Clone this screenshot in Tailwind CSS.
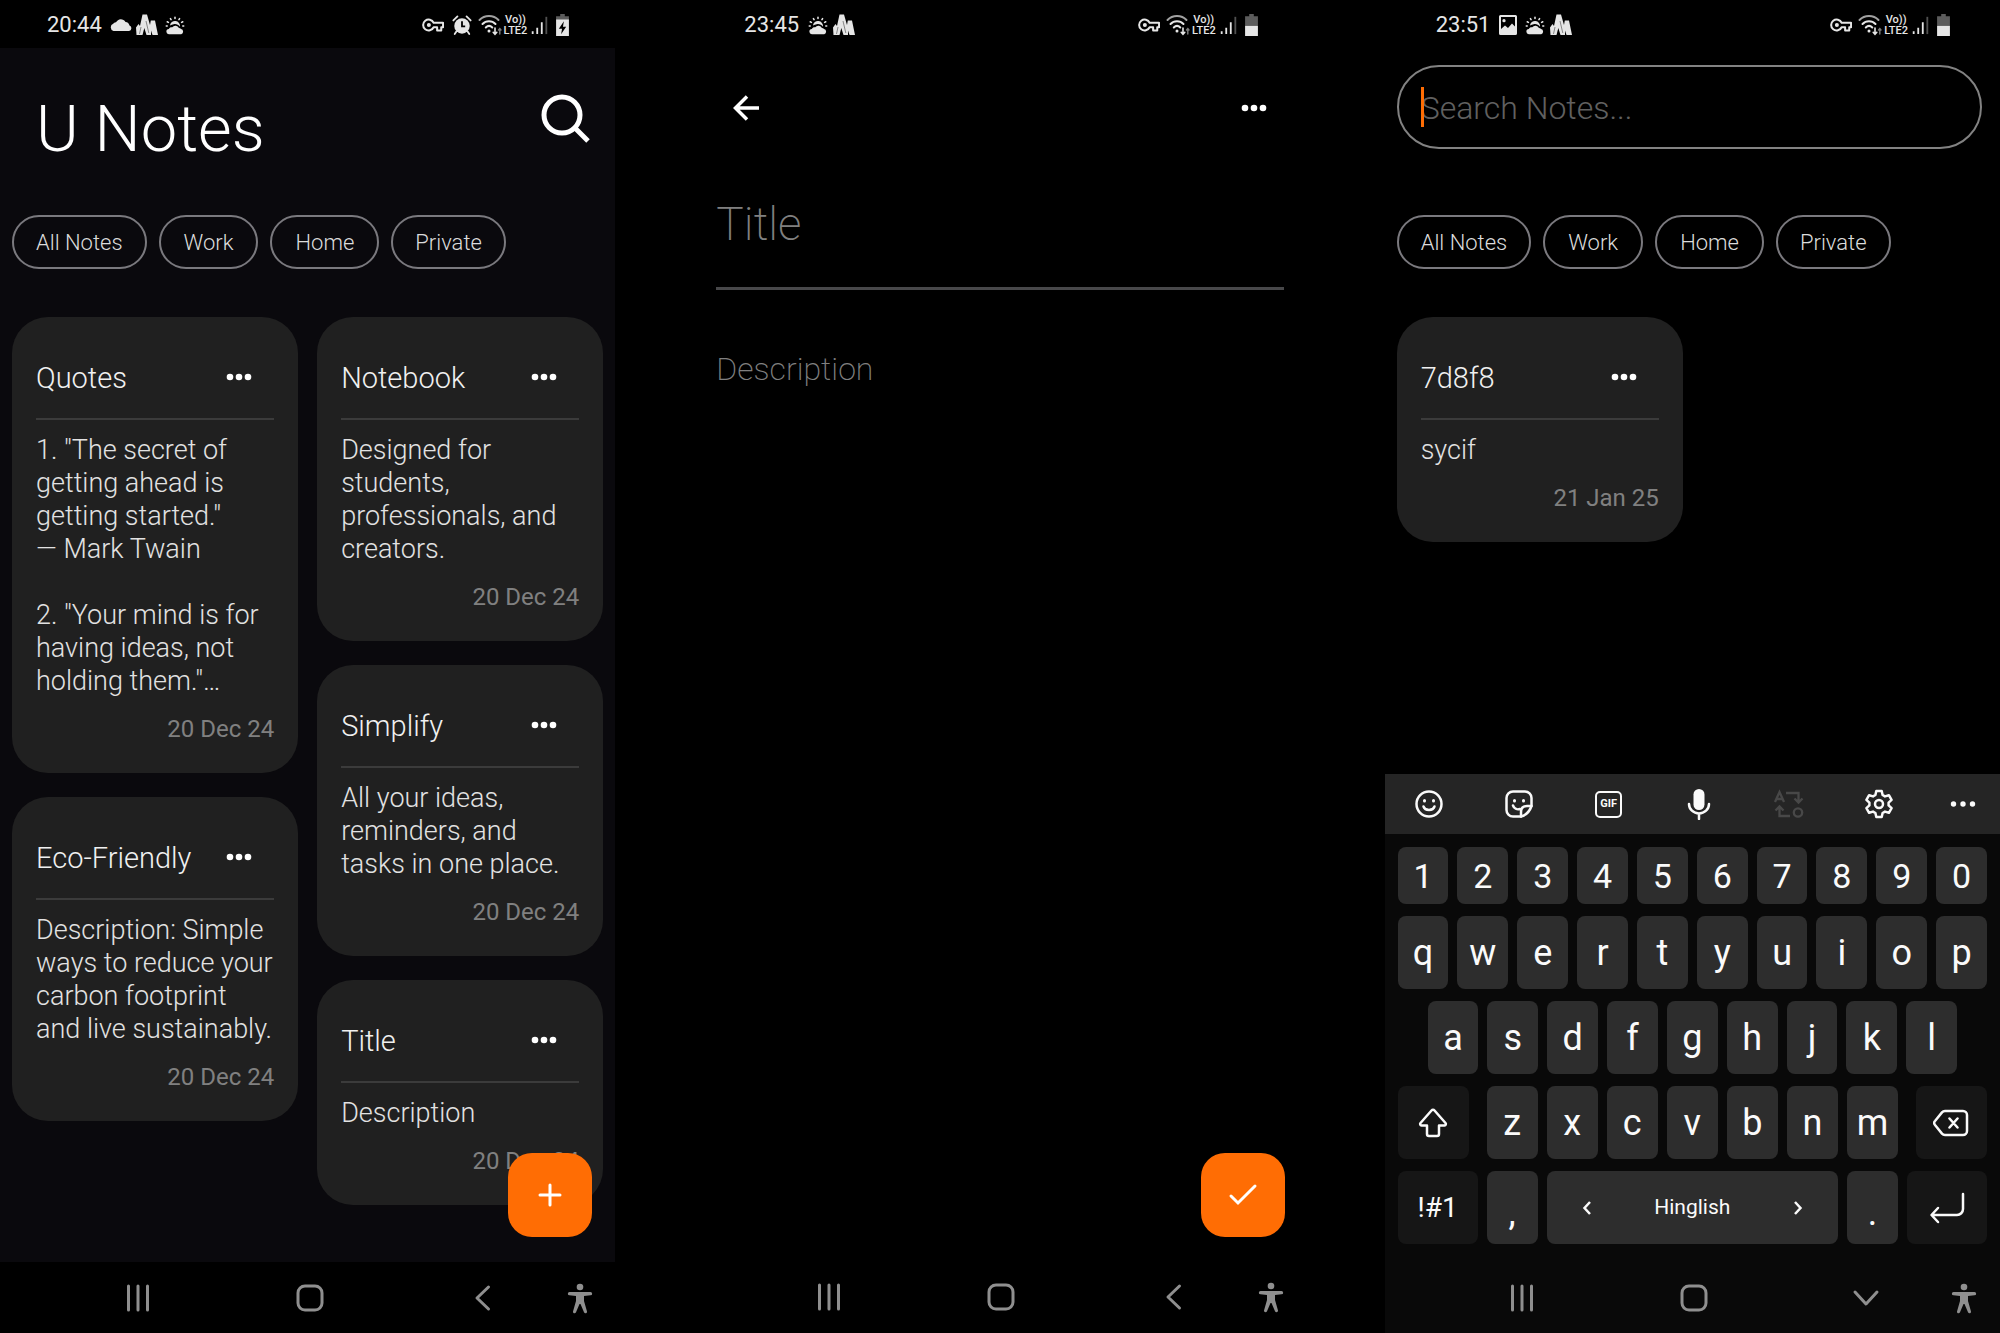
<!DOCTYPE html>
<html lang="en">
<head>
<meta charset="utf-8">
<meta name="viewport" content="width=device-width, initial-scale=1">
<title>U Notes</title>
<script src="https://cdn.jsdelivr.net/npm/@tailwindcss/browser@4"></script>
</head>
<body class="bg-black font-[Roboto,sans-serif] text-white">

<!-- Shared icons -->
<svg class="hidden" aria-hidden="true">
  <symbol id="i-cloud" viewBox="0 0 22 20"><path fill="currentColor" d="M3.500 16a3.800 3.800 0 0 1-.3-7.200 3 3 0 0 1 2.800-1.600A5.500 5.500 0 0 1 15.500 7a4.600 4.600 0 0 1 4 3.600 2.800 2.800 0 0 1-.5 5.400z"/></symbol>
  <symbol id="i-peaks" viewBox="0 0 22 22"><path fill="currentColor" d="M.5 21 0 13.500 2.500 10l1.500 2L6.500.5h4.500L14 11l.8-4.500H19L22 21h-5.500L15 16.500V21h-4.500L8.300 14 6.500 21z"/><path d="m5 13-1.500 7M10 7l2.800 12" stroke="#000" stroke-width=".7" opacity=".6" fill="none"/></symbol>
  <symbol id="i-sun" viewBox="0 0 24 24"><path fill="currentColor" d="M5.500 22a2.800 2.800 0 0 1-.2-5.600C6 14.700 7.500 14.200 9 14.500a4.300 4.300 0 0 1 7.300.8 3.500 3.500 0 0 1 2.300 1.100 2.900 2.900 0 0 1 .2 5.600z"/><path d="M6.500 12.500a5.500 5.500 0 0 1 11 1.300c-2-2.300-4.500-3.300-7-2.500-1.500.5-2.500.8-4 1.200z" fill="currentColor"/><path d="M12 3.500v1.300M7 5l.7 1.200M17 5l-.7 1.200M3.500 8.500l1.300.7M20.500 8.500l-1.300.7M2.500 13h1M20.500 13h1" stroke="currentColor" stroke-width="1.700" stroke-linecap="round"/></symbol>
  <symbol id="i-image" viewBox="0 0 20 22"><path fill="currentColor" fill-rule="evenodd" d="M2.500 1h15A1.500 1.500 0 0 1 19 2.500v17a1.500 1.500 0 0 1-1.500 1.500h-15A1.500 1.500 0 0 1 1 19.500v-17A1.500 1.500 0 0 1 2.500 1zM3 3v12l4-3.500 3 2.500 4-4.500 3 3V3zM6 5a1.600 1.600 0 1 1 0 3.300A1.600 1.600 0 0 1 6 5z"/></symbol>
  <symbol id="i-key" viewBox="0 0 24 20"><path fill="none" stroke="currentColor" stroke-width="2.200" stroke-linejoin="round" d="M12.700 7.500H23v5h-2v3.500h-4.500v-3.500h-3.800a6 6 0 1 1 0-5z"/><circle cx="7.500" cy="10" r="2.200" fill="currentColor"/></symbol>
  <symbol id="i-alarm" viewBox="0 0 22 24"><circle cx="11" cy="13" r="8.500" fill="currentColor"/><path d="M1.500 7 6 2.500M20.500 7 16 2.500M5 19l-2 3M17 19l2 3" stroke="currentColor" stroke-width="2" stroke-linecap="round"/><path d="M11 8v5.500h3.500" stroke="#000" stroke-width="2" fill="none"/></symbol>
  <symbol id="i-wifi" viewBox="0 0 24 24"><g fill="none" stroke="currentColor" stroke-width="2" stroke-linecap="round"><path d="M1.500 7c5-5.300 14-5.300 19 0" opacity=".7"/><path d="M4.500 11c3.500-3.700 9.500-3.700 13 0M7.800 14.500c2-2 4.500-2 6.500 0"/><path d="M17 15v6M15.200 19.300 17 21.300l1.800-2" stroke-width="1.600"/><path d="M21.800 21v-5M20.500 17l1.300-1.500L23 17" stroke-width="1.400" opacity=".55"/></g><circle cx="11" cy="18" r="1.500" fill="currentColor"/></symbol>
  <symbol id="i-signal" viewBox="0 0 18 22"><g stroke="currentColor" stroke-width="2"><path d="M1.500 21v-3M6.500 21v-7M11.500 21V8"/><path d="M16.500 21V2" opacity=".35"/></g></symbol>
  <symbol id="i-battery" viewBox="0 0 14 24"><path fill="#5c5c5c" d="M4.500 0h5v2.500H14V13H0V2.500h4.500z"/><path fill="currentColor" d="M0 13h14v11H0z"/></symbol>
  <symbol id="i-charging" viewBox="0 0 14 24"><path fill="#5c5c5c" d="M4.500 0h5v2.500H14V7H0V2.500h4.500z"/><path fill="currentColor" d="M0 6h14v18H0z"/><path fill="#000" d="M8.500 8 3 16h3.500L5.500 22 11 14H7.500z"/></symbol>
  <symbol id="i-dots" viewBox="0 0 28 10"><g fill="currentColor"><circle cx="5" cy="5" r="3.300"/><circle cx="14" cy="5" r="3.300"/><circle cx="23" cy="5" r="3.300"/></g></symbol>
  <symbol id="i-recents" viewBox="0 0 32 32"><path d="M6.500 4v24M16 4v24M25.500 4v24" stroke="currentColor" stroke-width="3" stroke-linecap="round"/></symbol>
  <symbol id="i-home" viewBox="0 0 32 32"><rect x="4" y="4" width="24" height="24" rx="7" fill="none" stroke="currentColor" stroke-width="3"/></symbol>
  <symbol id="i-back" viewBox="0 0 32 32"><path d="M22.500 5 11 16l11.500 11" fill="none" stroke="currentColor" stroke-width="3" stroke-linecap="round" stroke-linejoin="round"/></symbol>
  <symbol id="i-down" viewBox="0 0 32 32"><path d="m5 10 11 12 11-12" fill="none" stroke="currentColor" stroke-width="3" stroke-linecap="round" stroke-linejoin="round"/></symbol>
  <symbol id="i-access" viewBox="0 0 32 32"><circle cx="16" cy="5" r="3.300" fill="currentColor"/><path fill="currentColor" d="M5.500 10h21a1.300 1.300 0 0 1 0 3.300L20 14v5l3 10.500c.4 1.800-2.300 2.500-3 .8L16.500 22h-1L12 30.300c-.7 1.700-3.400 1-3-.8L12 19v-5l-6.500-.7a1.300 1.300 0 0 1 0-3.300z"/></symbol>
</svg>

<div class="grid min-h-screen grid-cols-3 gap-[77px]">

  <!-- Notes list -->
  <section class="relative flex flex-col bg-[#0a090d]" aria-label="Notes list">
    <div class="flex h-12 items-center bg-black pt-[2px] pr-[46px] pl-[47px] text-[#e6e6e6]">
      <span class="text-[22px] leading-6">20:44</span>
      <svg class="ml-2 h-5 w-[22px]"><use href="#i-cloud"/></svg>
      <svg class="ml-1 size-[22px]"><use href="#i-peaks"/></svg>
      <svg class="ml-[6px] size-[22px]"><use href="#i-sun"/></svg>
      <svg class="ml-auto h-5 w-[22px]"><use href="#i-key"/></svg>
      <svg class="ml-2 h-[22px] w-5"><use href="#i-alarm"/></svg>
      <svg class="ml-[6px] size-6"><use href="#i-wifi"/></svg>
      <span class="ml-[2px] text-center text-[11px] leading-[11px] font-medium">Vo))<br>LTE2</span>
      <svg class="ml-1 h-5 w-[17px]"><use href="#i-signal"/></svg>
      <svg class="ml-2 h-[22px] w-[13px]"><use href="#i-charging"/></svg>
    </div>

    <header class="flex h-[167px] items-start justify-between pt-[45px] pr-6 pl-9">
      <h1 class="text-[65px] leading-[72px] font-[350]">U Notes</h1>
      <button type="button" aria-label="Search" class="flex size-[52px] items-center justify-center">
        <svg class="size-[52px]" viewBox="0 0 52 52" fill="none" stroke="currentColor" stroke-width="5"><circle cx="23" cy="22" r="18"/><path d="m36 35 13 13"/></svg>
      </button>
    </header>

    <nav class="flex gap-3 px-3 text-[22px] leading-[48px] font-light text-[#dcdcdc]" aria-label="Categories">
      <button type="button" class="rounded-[27px] border-2 border-[#7a797e] px-[22px] pt-[2px]">All Notes</button>
      <button type="button" class="rounded-[27px] border-2 border-[#7a797e] px-[23px] pt-[2px]">Work</button>
      <button type="button" class="rounded-[27px] border-2 border-[#7a797e] px-[23px] pt-[2px]">Home</button>
      <button type="button" class="rounded-[27px] border-2 border-[#7a797e] px-[22px] pt-[2px]">Private</button>
    </nav>

    <main class="mt-12 grid flex-1 grid-cols-2 items-start gap-[19px] px-3 font-light">
      <div class="flex flex-col gap-6">
        <article class="rounded-[36px] bg-[#202020] px-6 pt-6 pb-[29px]">
          <div class="mb-[5px] flex h-[72px] items-center justify-between">
            <h2 class="pt-[2px] text-[29px] leading-9 text-[#f0f0f0]">Quotes</h2>
            <button type="button" aria-label="Note options" class="flex h-12 w-[70px] items-center justify-center"><svg class="h-[10px] w-7"><use href="#i-dots"/></svg></button>
          </div>
          <p class="border-t-2 border-[#3b3b3b] pt-[14px] text-[27px] leading-[33px] whitespace-nowrap text-[#e2e2e2]">1. "The secret of<br>getting ahead is<br>getting started."<br>— Mark Twain<br><br>2. "Your mind is for<br>having ideas, not<br>holding them."…</p>
          <time class="mt-4 block text-right text-2xl leading-[30px] font-normal text-[#808080]">20 Dec 24</time>
        </article>
        <article class="rounded-[36px] bg-[#202020] px-6 pt-6 pb-[29px]">
          <div class="mb-[5px] flex h-[72px] items-center justify-between">
            <h2 class="pt-[2px] text-[29px] leading-9 text-[#f0f0f0]">Eco-Friendly</h2>
            <button type="button" aria-label="Note options" class="flex h-12 w-[70px] items-center justify-center"><svg class="h-[10px] w-7"><use href="#i-dots"/></svg></button>
          </div>
          <p class="border-t-2 border-[#3b3b3b] pt-[14px] text-[27px] leading-[33px] whitespace-nowrap text-[#e2e2e2]">Description: Simple<br>ways to reduce your<br>carbon footprint<br>and live sustainably.</p>
          <time class="mt-4 block text-right text-2xl leading-[30px] font-normal text-[#808080]">20 Dec 24</time>
        </article>
      </div>
      <div class="flex flex-col gap-6">
        <article class="rounded-[36px] bg-[#202020] px-6 pt-6 pb-[29px]">
          <div class="mb-[5px] flex h-[72px] items-center justify-between">
            <h2 class="pt-[2px] text-[29px] leading-9 text-[#f0f0f0]">Notebook</h2>
            <button type="button" aria-label="Note options" class="flex h-12 w-[70px] items-center justify-center"><svg class="h-[10px] w-7"><use href="#i-dots"/></svg></button>
          </div>
          <p class="border-t-2 border-[#3b3b3b] pt-[14px] text-[27px] leading-[33px] whitespace-nowrap text-[#e2e2e2]">Designed for<br>students,<br>professionals, and<br>creators.</p>
          <time class="mt-4 block text-right text-2xl leading-[30px] font-normal text-[#808080]">20 Dec 24</time>
        </article>
        <article class="rounded-[36px] bg-[#202020] px-6 pt-6 pb-[29px]">
          <div class="mb-[5px] flex h-[72px] items-center justify-between">
            <h2 class="pt-[2px] text-[29px] leading-9 text-[#f0f0f0]">Simplify</h2>
            <button type="button" aria-label="Note options" class="flex h-12 w-[70px] items-center justify-center"><svg class="h-[10px] w-7"><use href="#i-dots"/></svg></button>
          </div>
          <p class="border-t-2 border-[#3b3b3b] pt-[14px] text-[27px] leading-[33px] whitespace-nowrap text-[#e2e2e2]">All your ideas,<br>reminders, and<br>tasks in one place.</p>
          <time class="mt-4 block text-right text-2xl leading-[30px] font-normal text-[#808080]">20 Dec 24</time>
        </article>
        <article class="rounded-[36px] bg-[#202020] px-6 pt-6 pb-[29px]">
          <div class="mb-[5px] flex h-[72px] items-center justify-between">
            <h2 class="pt-[2px] text-[29px] leading-9 text-[#f0f0f0]">Title</h2>
            <button type="button" aria-label="Note options" class="flex h-12 w-[70px] items-center justify-center"><svg class="h-[10px] w-7"><use href="#i-dots"/></svg></button>
          </div>
          <p class="border-t-2 border-[#3b3b3b] pt-[14px] text-[27px] leading-[33px] whitespace-nowrap text-[#e2e2e2]">Description</p>
          <time class="mt-4 block text-right text-2xl leading-[30px] font-normal text-[#808080]">20 Dec 24</time>
        </article>
      </div>
    </main>

    <button type="button" aria-label="Add note" class="absolute right-[23px] bottom-[96px] flex size-[84px] items-center justify-center rounded-3xl bg-[#ff6d04]">
      <svg class="size-7" viewBox="0 0 28 28" stroke="#fff" stroke-width="3" stroke-linecap="round"><path d="M14 4v20M4 14h20"/></svg>
    </button>

    <nav class="flex h-[71px] items-center bg-black pl-[52px] text-[#8f8f8f]" aria-label="System">
      <button type="button" aria-label="Recents" class="flex w-[172px] justify-center"><svg class="size-8"><use href="#i-recents"/></svg></button>
      <button type="button" aria-label="Home" class="flex w-[172px] justify-center"><svg class="size-8"><use href="#i-home"/></svg></button>
      <button type="button" aria-label="Back" class="flex w-[172px] justify-center"><svg class="size-8"><use href="#i-back"/></svg></button>
      <button type="button" aria-label="Accessibility" class="flex w-6 justify-center"><svg class="size-8 shrink-0"><use href="#i-access"/></svg></button>
    </nav>
  </section>

  <!-- Note editor -->
  <section class="relative flex flex-col bg-black" aria-label="Note editor">
    <div class="flex h-12 items-center pt-[2px] pr-[50px] pl-[52px] text-[#e6e6e6]">
      <span class="text-[22px] leading-6">23:45</span>
      <svg class="ml-2 size-[22px]"><use href="#i-sun"/></svg>
      <svg class="ml-1 size-[22px]"><use href="#i-peaks"/></svg>
      <svg class="ml-auto h-5 w-[22px]"><use href="#i-key"/></svg>
      <svg class="ml-[6px] size-6"><use href="#i-wifi"/></svg>
      <span class="ml-[2px] text-center text-[11px] leading-[11px] font-medium">Vo))<br>LTE2</span>
      <svg class="ml-1 h-5 w-[17px]"><use href="#i-signal"/></svg>
      <svg class="ml-2 h-[22px] w-[13px]"><use href="#i-battery"/></svg>
    </div>

    <header class="flex h-[120px] items-center justify-between px-[30px]">
      <button type="button" aria-label="Go back" class="flex size-12 items-center justify-center">
        <svg class="size-8" viewBox="0 0 32 32" fill="none" stroke="currentColor" stroke-width="3.500"><path d="M29 16H6M17 4.500 5.500 16 17 27.500"/></svg>
      </button>
      <button type="button" aria-label="More options" class="flex size-12 items-center justify-center"><svg class="h-[10px] w-7"><use href="#i-dots"/></svg></button>
    </header>

    <form class="flex flex-col px-6">
      <input type="text" aria-label="Title" placeholder="Title" class="h-[122px] w-full border-b-[3px] border-[#48484a] bg-transparent pb-2 text-[46px] font-extralight outline-none placeholder:text-[#808080]">
      <textarea aria-label="Description" placeholder="Description" rows="1" class="mt-[57px] h-[44px] w-full resize-none overflow-hidden bg-transparent text-[32px] leading-[44px] font-extralight outline-none placeholder:text-[#808080]"></textarea>
    </form>

    <button type="button" aria-label="Save note" class="absolute right-[23px] bottom-[96px] flex size-[84px] items-center justify-center rounded-3xl bg-[#ff6d04]">
      <svg class="size-8" viewBox="0 0 32 32" fill="none" stroke="#fff" stroke-width="3" stroke-linecap="round"><path d="m4 17 7 7L28 7"/></svg>
    </button>

    <nav class="mt-auto flex h-[72px] items-center pl-[51px] text-[#8f8f8f]" aria-label="System">
      <button type="button" aria-label="Recents" class="flex w-[172px] justify-center"><svg class="size-8"><use href="#i-recents"/></svg></button>
      <button type="button" aria-label="Home" class="flex w-[172px] justify-center"><svg class="size-8"><use href="#i-home"/></svg></button>
      <button type="button" aria-label="Back" class="flex w-[172px] justify-center"><svg class="size-8"><use href="#i-back"/></svg></button>
      <button type="button" aria-label="Accessibility" class="flex w-6 justify-center"><svg class="size-8 shrink-0"><use href="#i-access"/></svg></button>
    </nav>
  </section>

  <!-- Search -->
  <section class="flex flex-col bg-black" aria-label="Search">
    <div class="flex h-12 items-center pt-[2px] pr-[50px] pl-[51px] text-[#e6e6e6]">
      <span class="text-[22px] leading-6">23:51</span>
      <svg class="ml-2 h-[22px] w-5"><use href="#i-image"/></svg>
      <svg class="ml-[6px] size-[22px]"><use href="#i-sun"/></svg>
      <svg class="ml-1 size-[22px]"><use href="#i-peaks"/></svg>
      <svg class="ml-auto h-5 w-[22px]"><use href="#i-key"/></svg>
      <svg class="ml-[6px] size-6"><use href="#i-wifi"/></svg>
      <span class="ml-[2px] text-center text-[11px] leading-[11px] font-medium">Vo))<br>LTE2</span>
      <svg class="ml-1 h-5 w-[17px]"><use href="#i-signal"/></svg>
      <svg class="ml-2 h-[22px] w-[13px]"><use href="#i-battery"/></svg>
    </div>

    <div class="relative mt-[17px] mr-[18px] mb-[66px] ml-3">
      <input type="search" aria-label="Search notes" placeholder="Search Notes..." class="h-[84px] w-full rounded-[42px] border-2 border-[#828282] bg-transparent px-[22px] pt-[2px] text-[32px] font-light outline-none placeholder:text-[#606060]">
      <span class="absolute top-[22px] left-6 h-10 w-[3px] bg-[#ff6d04]" aria-hidden="true"></span>
    </div>

    <nav class="flex gap-3 px-3 text-[22px] leading-[48px] font-light text-[#dcdcdc]" aria-label="Categories">
      <button type="button" class="rounded-[27px] border-2 border-[#7a797e] px-[22px] pt-[2px]">All Notes</button>
      <button type="button" class="rounded-[27px] border-2 border-[#7a797e] px-[23px] pt-[2px]">Work</button>
      <button type="button" class="rounded-[27px] border-2 border-[#7a797e] px-[23px] pt-[2px]">Home</button>
      <button type="button" class="rounded-[27px] border-2 border-[#7a797e] px-[22px] pt-[2px]">Private</button>
    </nav>

    <main class="mt-12 grid grid-cols-2 items-start gap-[19px] px-3 font-light">
      <article class="rounded-[36px] bg-[#202020] px-6 pt-6 pb-[29px]">
        <div class="mb-[5px] flex h-[72px] items-center justify-between">
          <h2 class="pt-[2px] text-[29px] leading-9 text-[#f0f0f0]">7d8f8</h2>
          <button type="button" aria-label="Note options" class="flex h-12 w-[70px] items-center justify-center"><svg class="h-[10px] w-7"><use href="#i-dots"/></svg></button>
        </div>
        <p class="border-t-2 border-[#3b3b3b] pt-[14px] text-[27px] leading-[33px] whitespace-nowrap text-[#e2e2e2]">sycif</p>
        <time class="mt-4 block text-right text-2xl leading-[30px] font-normal text-[#808080]">21 Jan 25</time>
      </article>
    </main>

    <!-- On-screen keyboard -->
    <div class="mt-auto bg-[#090909]">
      <div class="flex h-[60px] items-center gap-[58px] bg-[#252525] pl-7">
        <button type="button" aria-label="Emoji"><svg class="size-8" viewBox="0 0 32 32" fill="none" stroke="#fafafa" stroke-width="2.500" stroke-linecap="round"><circle cx="16" cy="16" r="12.500"/><path d="M10.500 18.500c1.500 4.500 9.500 4.500 11 0"/><path d="M11.500 12.500v.5M20.500 12.500v.5" stroke-width="3"/></svg></button>
        <button type="button" aria-label="Stickers"><svg class="size-8" viewBox="0 0 32 32" fill="none" stroke="#fafafa" stroke-width="2.500" stroke-linecap="round" stroke-linejoin="round"><path d="M18 28.500h-8A6.500 6.500 0 0 1 3.500 22V10A6.500 6.500 0 0 1 10 3.500h12a6.500 6.500 0 0 1 6.500 6.500v8c-2 6-5 9-10.500 10.500z"/><path d="M18 28.500V24c0-4 2-6 6-6h4.500M10 17.500c1 3 4 4.500 7 3.500"/><path d="M11.500 12.500v.5M20.500 12.500v.5" stroke-width="3"/></svg></button>
        <button type="button" aria-label="GIFs" class="flex size-8 items-center justify-center"><span class="flex size-[27px] items-center justify-center rounded-[5px] border-[2px] border-[#fafafa] text-[11px] leading-3 font-bold text-[#fafafa]">GIF</span></button>
        <button type="button" aria-label="Voice input"><svg class="size-8" viewBox="0 0 32 32"><rect x="10.500" y="1" width="11" height="21" rx="5.500" fill="#fafafa"/><path d="M6 16a10 9.500 0 0 0 20 0M16 25.500V31" fill="none" stroke="#fafafa" stroke-width="2.500" stroke-linecap="round"/></svg></button>
        <button type="button" aria-label="Translate"><svg class="size-8" viewBox="0 0 32 32" fill="none" stroke="#484848" stroke-width="2.300"><path d="m2 14 4.500-10L11 14M3.500 11h6M13 5h12.500v9M21.500 10.500l4 4 4-4M17 28H6.500v-9M2.500 22.500l4-4 4 4"/><circle cx="25" cy="24.500" r="4.200"/></svg></button>
        <button type="button" aria-label="Keyboard settings"><svg class="size-8" viewBox="0 0 32 32" fill="none" stroke="#fafafa" stroke-width="2.500" stroke-linejoin="round"><path d="M13.300 3h5.400l.9 4 2.400 1.400 3.900-1.200 2.700 4.600-3 2.800v2.800l3 2.800-2.700 4.600-3.900-1.200-2.400 1.400-.9 4h-5.400l-.9-4L10 23.600l-3.900 1.200-2.700-4.600 3-2.800v-2.800l-3-2.800 2.700-4.600L10 8.400 12.400 7z"/><circle cx="16" cy="16" r="4"/></svg></button>
        <button type="button" aria-label="More keyboard tools" class="flex w-5 justify-center"><svg class="h-[10px] w-7 shrink-0" viewBox="0 0 28 10" fill="#fafafa"><circle cx="4.500" cy="5" r="2.700"/><circle cx="14" cy="5" r="2.700"/><circle cx="23.500" cy="5" r="2.700"/></svg></button>
      </div>

      <div class="flex flex-col gap-3 px-[13px] pt-[13px] pb-[18px] text-4xl text-[#fafafa]">
        <div class="grid h-[57px] grid-cols-10 gap-[9px] text-[34px]">
          <button type="button" class="rounded-lg bg-[#2d2d2d] pt-[2px]">1</button><button type="button" class="rounded-lg bg-[#2d2d2d] pt-[2px]">2</button><button type="button" class="rounded-lg bg-[#2d2d2d] pt-[2px]">3</button><button type="button" class="rounded-lg bg-[#2d2d2d] pt-[2px]">4</button><button type="button" class="rounded-lg bg-[#2d2d2d] pt-[2px]">5</button><button type="button" class="rounded-lg bg-[#2d2d2d] pt-[2px]">6</button><button type="button" class="rounded-lg bg-[#2d2d2d] pt-[2px]">7</button><button type="button" class="rounded-lg bg-[#2d2d2d] pt-[2px]">8</button><button type="button" class="rounded-lg bg-[#2d2d2d] pt-[2px]">9</button><button type="button" class="rounded-lg bg-[#2d2d2d] pt-[2px]">0</button>
        </div>
        <div class="grid h-[73px] grid-cols-10 gap-[9px]">
          <button type="button" class="rounded-lg bg-[#2d2d2d]">q</button><button type="button" class="rounded-lg bg-[#2d2d2d]">w</button><button type="button" class="rounded-lg bg-[#2d2d2d]">e</button><button type="button" class="rounded-lg bg-[#2d2d2d]">r</button><button type="button" class="rounded-lg bg-[#2d2d2d]">t</button><button type="button" class="rounded-lg bg-[#2d2d2d]">y</button><button type="button" class="rounded-lg bg-[#2d2d2d]">u</button><button type="button" class="rounded-lg bg-[#2d2d2d]">i</button><button type="button" class="rounded-lg bg-[#2d2d2d]">o</button><button type="button" class="rounded-lg bg-[#2d2d2d]">p</button>
        </div>
        <div class="grid h-[73px] grid-cols-9 gap-[9px] px-[30px]">
          <button type="button" class="rounded-lg bg-[#2d2d2d]">a</button><button type="button" class="rounded-lg bg-[#2d2d2d]">s</button><button type="button" class="rounded-lg bg-[#2d2d2d]">d</button><button type="button" class="rounded-lg bg-[#2d2d2d]">f</button><button type="button" class="rounded-lg bg-[#2d2d2d]">g</button><button type="button" class="rounded-lg bg-[#2d2d2d]">h</button><button type="button" class="rounded-lg bg-[#2d2d2d]">j</button><button type="button" class="rounded-lg bg-[#2d2d2d]">k</button><button type="button" class="rounded-lg bg-[#2d2d2d]">l</button>
        </div>
        <div class="flex h-[73px] gap-[18px]">
          <button type="button" aria-label="Shift" class="flex w-[71px] items-center justify-center rounded-lg bg-[#161616]"><svg class="size-8" viewBox="0 0 32 32" fill="none" stroke="currentColor" stroke-width="2.500" stroke-linejoin="round"><path d="M14.500 3.500a2 2 0 0 1 3 0L28.500 16a1.500 1.500 0 0 1-1 2.500H22V27a2 2 0 0 1-2 2h-8a2 2 0 0 1-2-2v-8.500H4.500a1.500 1.500 0 0 1-1-2.500z"/></svg></button>
          <div class="grid flex-1 grid-cols-7 gap-[9px]">
            <button type="button" class="rounded-lg bg-[#2d2d2d]">z</button><button type="button" class="rounded-lg bg-[#2d2d2d]">x</button><button type="button" class="rounded-lg bg-[#2d2d2d]">c</button><button type="button" class="rounded-lg bg-[#2d2d2d]">v</button><button type="button" class="rounded-lg bg-[#2d2d2d]">b</button><button type="button" class="rounded-lg bg-[#2d2d2d]">n</button><button type="button" class="rounded-lg bg-[#2d2d2d]">m</button>
          </div>
          <button type="button" aria-label="Backspace" class="flex w-[71px] items-center justify-center rounded-lg bg-[#161616]"><svg class="h-7 w-9" viewBox="0 0 36 28" fill="none" stroke="currentColor" stroke-width="2.500" stroke-linejoin="round" stroke-linecap="round"><path d="M12 2h18a4 4 0 0 1 4 4v16a4 4 0 0 1-4 4H12a4 4 0 0 1-3-1.400L2 16a3 3 0 0 1 0-4l7-8.600A4 4 0 0 1 12 2zM16.500 9.500l8 9M24.500 9.500l-8 9"/></svg></button>
        </div>
        <div class="flex h-[73px] gap-[9px]">
          <button type="button" class="w-20 rounded-lg bg-[#161616] text-[28px]">!#1</button>
          <button type="button" class="w-[51px] rounded-lg bg-[#2d2d2d] pt-[10px]">,</button>
          <button type="button" aria-label="Space, Hinglish" class="flex flex-1 items-center justify-between rounded-lg bg-[#2d2d2d] px-8 text-[21px]">
            <svg class="size-4" viewBox="0 0 16 16" fill="none" stroke="currentColor" stroke-width="2.500"><path d="M11 2 5.500 8l5.500 6"/></svg>
            Hinglish
            <svg class="size-4" viewBox="0 0 16 16" fill="none" stroke="currentColor" stroke-width="2.500"><path d="m5 2 5.500 6L5 14"/></svg>
          </button>
          <button type="button" class="w-[51px] rounded-lg bg-[#2d2d2d] pt-[10px]">.</button>
          <button type="button" aria-label="Enter" class="flex w-20 items-center justify-center rounded-lg bg-[#161616]"><svg class="h-8 w-9" viewBox="0 0 36 32" fill="none" stroke="currentColor" stroke-width="2.500" stroke-linecap="round" stroke-linejoin="round"><path d="M34 2v15a6 6 0 0 1-6 6H3M9 16l-6.500 7L9 30"/></svg></button>
        </div>
      </div>

      <nav class="flex h-[71px] items-center pl-[51px] text-[#8f8f8f]" aria-label="System">
        <button type="button" aria-label="Recents" class="flex w-[172px] justify-center"><svg class="size-8"><use href="#i-recents"/></svg></button>
        <button type="button" aria-label="Home" class="flex w-[172px] justify-center"><svg class="size-8"><use href="#i-home"/></svg></button>
        <button type="button" aria-label="Hide keyboard" class="flex w-[172px] justify-center"><svg class="size-8"><use href="#i-down"/></svg></button>
        <button type="button" aria-label="Accessibility" class="flex w-6 justify-center"><svg class="size-8 shrink-0"><use href="#i-access"/></svg></button>
      </nav>
    </div>
  </section>
</div>
</body>
</html>
